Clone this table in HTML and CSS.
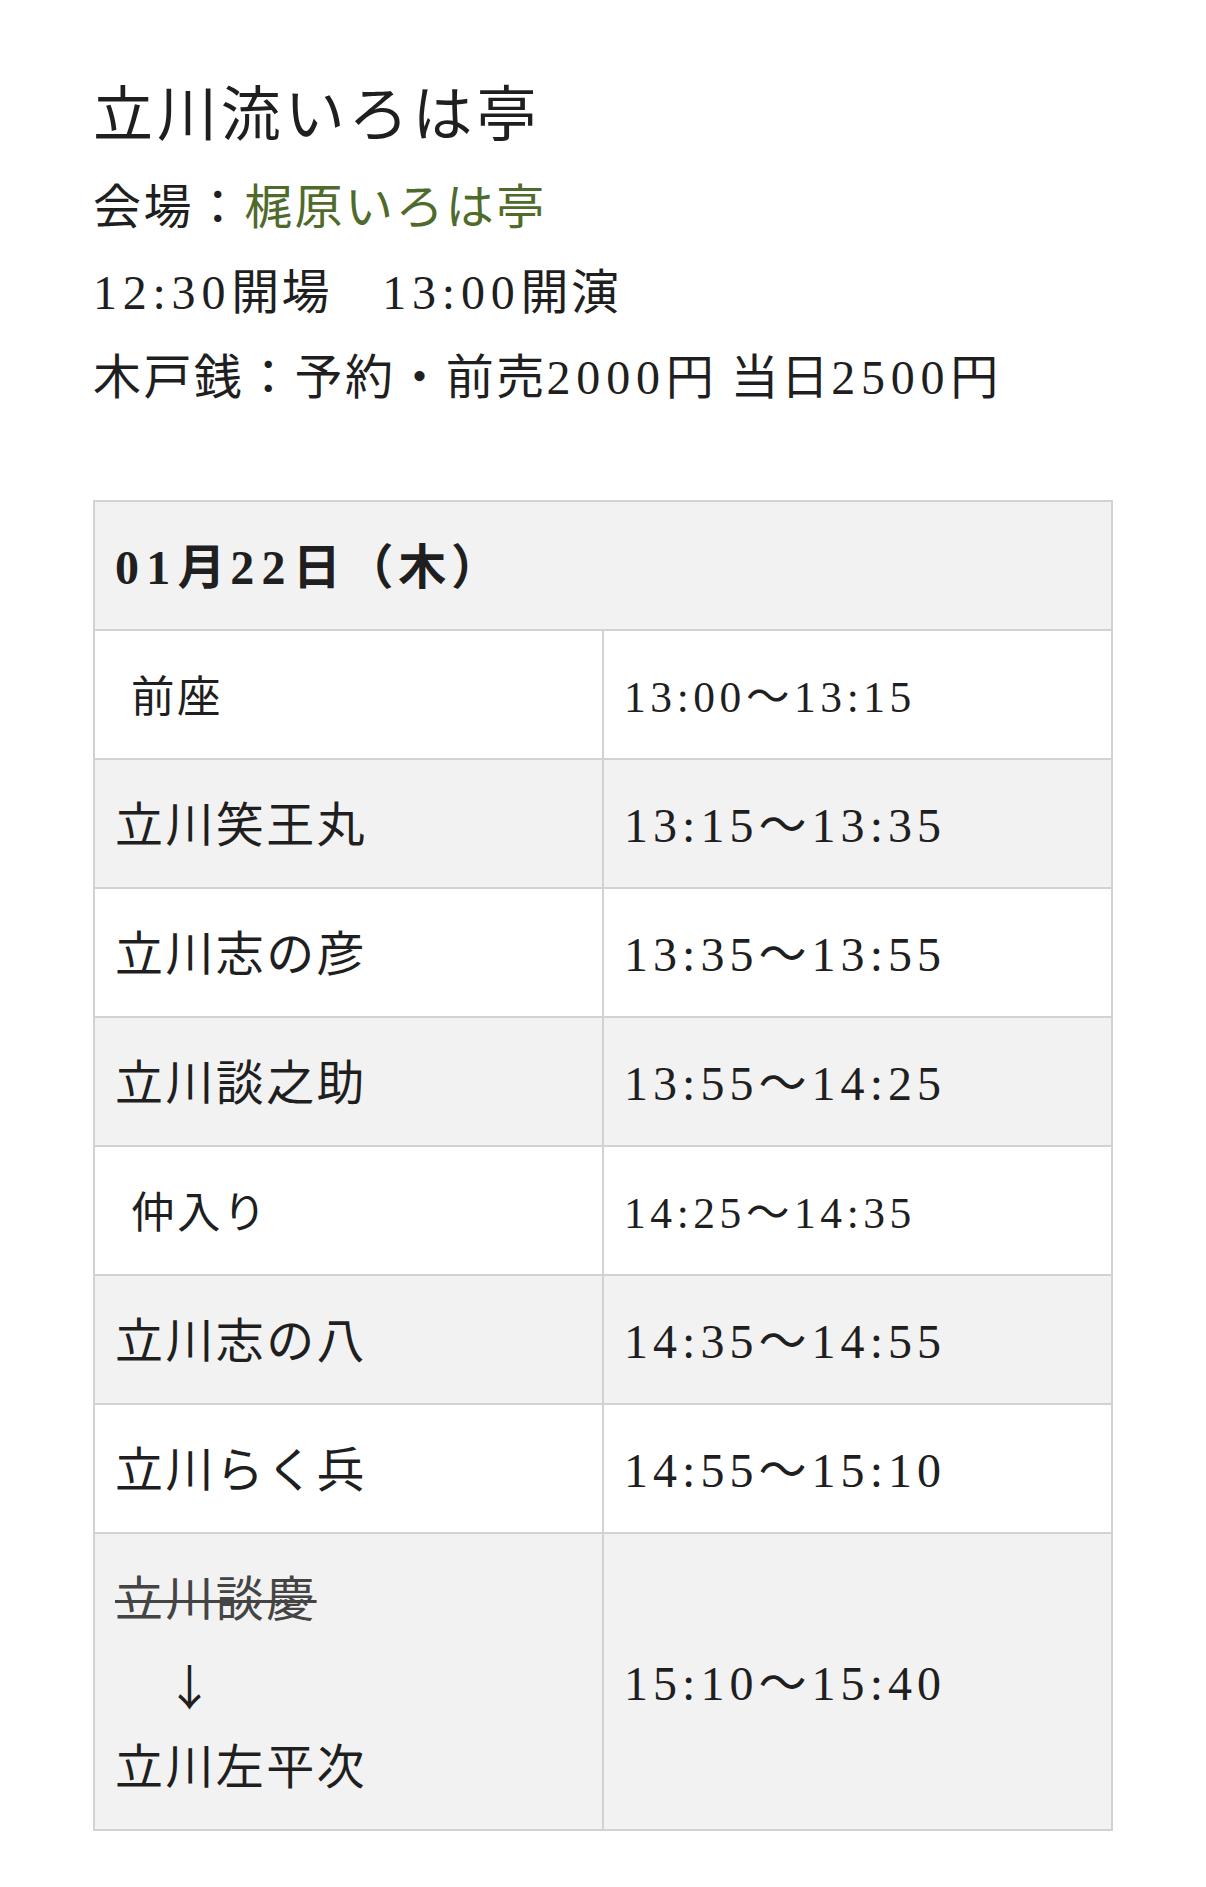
FILE: index.html
```html
<!DOCTYPE html>
<html lang="ja">
<head>
<meta charset="utf-8">
<title>立川流いろは亭</title>
<link rel="stylesheet" href="styles.css">
</head>
<body>
<main class="page">
  <section class="event">
    <h1 class="event-title">立川流いろは亭</h1>
    <p class="event-line">会場：<a class="venue" href="#">梶原いろは亭</a></p>
    <p class="event-line"><span class="num">12:30</span>開場　<span class="num">13:00</span>開演</p>
    <p class="event-line">木戸銭：予約・前売<span class="num">2000</span>円 当日<span class="num">2500</span>円</p>
  </section>

  <table class="program">
    <thead>
      <tr><th colspan="2" class="program-date"><span class="num">01</span>月<span class="num">22</span>日（木）</th></tr>
    </thead>
    <tbody>
      <tr class="row row-white row-small"><td class="name">前座</td><td class="time">13:00〜13:15</td></tr>
      <tr class="row row-gray"><td class="name">立川笑王丸</td><td class="time">13:15〜13:35</td></tr>
      <tr class="row row-white"><td class="name">立川志の彦</td><td class="time">13:35〜13:55</td></tr>
      <tr class="row row-gray"><td class="name">立川談之助</td><td class="time">13:55〜14:25</td></tr>
      <tr class="row row-white row-small"><td class="name">仲入り</td><td class="time">14:25〜14:35</td></tr>
      <tr class="row row-gray"><td class="name">立川志の八</td><td class="time">14:35〜14:55</td></tr>
      <tr class="row row-white"><td class="name">立川らく兵</td><td class="time">14:55〜15:10</td></tr>
      <tr class="row row-gray">
        <td class="name">
          <div class="name-line"><del class="cancelled">立川談慶</del></div>
          <div class="name-line arrow">　↓</div>
          <div class="name-line">立川左平次</div>
        </td>
        <td class="time">15:10〜15:40</td>
      </tr>
    </tbody>
  </table>
</main>
</body>
</html>
```

FILE: styles.css
```css
html, body {
  margin: 0;
  padding: 0;
  background: #ffffff;
}

body {
  font-family: "Liberation Serif", "Noto Sans CJK JP", serif;
  color: #1f1f1f;
  font-size: 48px;
  line-height: 1.75;
  letter-spacing: 0.05em;
}

.page {
  padding: 71px 93px 60px;
}

.event {
  margin-bottom: 80px;
}

.event-title {
  margin: 0 0 4px;
  font-size: 60px;
  font-weight: 400;
  line-height: 1.5;
  letter-spacing: 0.065em;
}

.event-line {
  margin: 0;
  line-height: 85px;
}

.num {
  letter-spacing: 0.12em;
}

.venue {
  color: #4f6b2b;
  text-decoration: none;
}

.program {
  width: 100%;
  border-collapse: collapse;
  table-layout: fixed;
}

.program th,
.program td {
  border: 2px solid #d2d2d2;
  padding: 24px 20px 19px;
  text-align: left;
  vertical-align: middle;
  font-weight: 400;
  line-height: 84px;
}

.program-date {
  background: #f2f2f2;
  font-weight: 700 !important;
  letter-spacing: 0.1em;
}

.program-date .num {
  letter-spacing: 0.15em;
}

.time {
  letter-spacing: 0.105em;
}

.row-gray td {
  background: #f2f2f2;
}

.row-white td {
  background: #ffffff;
}

.row-small td {
  font-size: 43.5px;
}

.row-small .name {
  padding-left: 36px;
}

.name-line {
  height: 84px;
  line-height: 84px;
}

.cancelled {
  color: #444444;
  text-decoration-thickness: 3px;
}

.arrow {
  font-family: "Noto Sans CJK JP", sans-serif;
}
```
